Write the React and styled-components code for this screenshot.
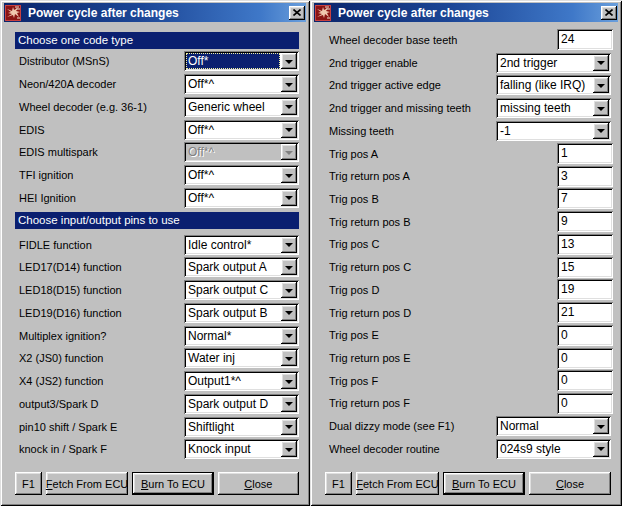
import React from "react";
import styled, { createGlobalStyle, css } from "styled-components";

const GlobalStyle = createGlobalStyle`
  html, body {
    margin: 0;
    padding: 0;
    background: #c0c0c0;
    font-family: "Liberation Sans", Arial, sans-serif;
    font-size: 11px;
  }
`;

const raised = css`
  box-shadow: inset -1px -1px #000, inset 1px 1px #fff, inset -2px -2px #808080,
    inset 2px 2px #dfdfdf;
`;

const sunken = css`
  box-shadow: inset 1px 1px #808080, inset -1px -1px #fff, inset 2px 2px #000,
    inset -2px -2px #dfdfdf;
`;

const Desktop = styled.div`
  display: flex;
  width: 622px;
  height: 506px;
`;

const Window = styled.div`
  box-sizing: border-box;
  width: ${(p) => p.$width}px;
  height: 506px;
  padding: 3px 4px 4px 4px;
  background: #c0c0c0;
  display: flex;
  flex-direction: column;
  box-shadow: inset 1px 1px #dfdfdf, inset -1px -1px #000, inset 2px 2px #fff,
    inset -2px -2px #808080;
`;

const TitleBar = styled.div`
  height: 19px;
  display: flex;
  align-items: center;
  padding: 0 1px 0 1px;
  background: linear-gradient(to right, #0a246a, #1c4696 45%, #3f78c8 85%, #6a9fdc);
`;

const TitleText = styled.div`
  flex: 1;
  margin-left: 7px;
  color: #fff;
  font-weight: bold;
  font-size: 12px;
  white-space: nowrap;
`;

const CloseBox = styled.div`
  width: 16px;
  height: 14px;
  background: #c0c0c0;
  ${raised};
  display: flex;
  align-items: center;
  justify-content: center;
`;

const Content = styled.div`
  flex: 1;
  display: flex;
  flex-direction: column;
  padding: ${(p) => p.$top}px 7px 7px 11px;
`;

const Form = styled.div`
  display: flex;
  flex-direction: column;
  gap: 2px;
`;

const SectionHeader = styled.div`
  height: 17px;
  line-height: 17px;
  background: #0a1f70;
  color: #fff;
  padding-left: 3px;
  font-size: 11.5px;
  margin-top: ${(p) => p.$mt || 0}px;
  margin-bottom: ${(p) => p.$mb || 0}px;
`;

const Row = styled.div`
  height: ${(p) => p.$h}px;
  display: flex;
  align-items: center;
  justify-content: space-between;
`;

const Label = styled.span`
  padding-left: 4px;
  color: #000;
  white-space: nowrap;
`;

const Combo = styled.div`
  box-sizing: border-box;
  width: 115px;
  height: 20px;
  padding: 2px;
  display: flex;
  background: ${(p) => (p.$disabled ? "#c0c0c0" : "#fff")};
  ${sunken};
`;

const ComboValue = styled.div`
  flex: 1;
  margin-right: 1px;
  padding-left: 2px;
  display: flex;
  align-items: center;
  font-size: 12px;
  white-space: nowrap;
  overflow: hidden;
  color: #000;
  ${(p) =>
    p.$focused &&
    css`
      background: #0a1f70;
      color: #fff;
      outline: 1px dotted #f0f0a0;
      outline-offset: -1px;
    `}
  ${(p) =>
    p.$disabled &&
    css`
      color: #808080;
      text-shadow: 1px 1px #fff;
    `}
`;

const ArrowBtn = styled.div`
  width: 16px;
  height: 16px;
  background: #c0c0c0;
  ${raised};
  display: flex;
  align-items: center;
  justify-content: center;
  &::after {
    content: "";
    border-left: 4px solid transparent;
    border-right: 4px solid transparent;
    border-top: 4px solid ${(p) => (p.$disabled ? "#808080" : "#000")};
    margin-top: 1px;
  }
`;

const NumBox = styled.div`
  box-sizing: border-box;
  width: 56px;
  height: 21px;
  padding: 3px 4px 0 4px;
  margin-right: -2px;
  background: #fff;
  font-size: 12px;
  ${sunken};
`;

const ButtonBar = styled.div`
  margin-top: auto;
  display: flex;
  gap: 4px;
`;

const Btn = styled.div`
  box-sizing: border-box;
  width: ${(p) => p.$w}px;
  height: 23px;
  display: flex;
  align-items: center;
  justify-content: center;
  font-size: 11px;
  background: #c0c0c0;
  white-space: nowrap;
  ${(p) =>
    p.$default
      ? css`
          box-shadow: inset 0 0 0 1px #000, inset -2px -2px #000,
            inset 2px 2px #fff, inset -3px -3px #808080, inset 3px 3px #dfdfdf;
        `
      : raised};
`;

function AppIcon() {
  return (
    <svg width="16" height="16" viewBox="0 0 16 16">
      <rect x="0" y="0" width="16" height="16" fill="#8a1414" />
      <rect x="0.5" y="0.5" width="15" height="15" fill="none" stroke="#c84040" />
      <path
        d="M2 4 L6 7 L3 8 L7 9 L2 12 L8 10 L9 13 L10 9 L14 12 L12 8 L15 7 L11 6 L13 3 L9 5 L8 2 L7 6 Z"
        fill="#f0c8b0"
      />
      <path d="M10 2 L14 2 M11 4 L15 4 M12 13 L15 13" stroke="#f0e0d0" strokeWidth="1" />
    </svg>
  );
}

function CloseIcon() {
  return (
    <svg width="8" height="7" viewBox="0 0 8 7">
      <path d="M0.5 0.5 L7.5 6.5 M7.5 0.5 L0.5 6.5" stroke="#000" strokeWidth="1.6" />
    </svg>
  );
}

function Title() {
  return (
    <TitleBar>
      <AppIcon />
      <TitleText>Power cycle after changes</TitleText>
      <CloseBox>
        <CloseIcon />
      </CloseBox>
    </TitleBar>
  );
}

function Select({ value, focused, disabled }) {
  return (
    <Combo $disabled={disabled}>
      <ComboValue $focused={focused} $disabled={disabled}>
        {value}
      </ComboValue>
      <ArrowBtn $disabled={disabled} />
    </Combo>
  );
}

function Buttons() {
  return (
    <ButtonBar>
      <Btn $w={27}>F1</Btn>
      <Btn $w={83}>
        <u>F</u>etch From ECU
      </Btn>
      <Btn $w={82} $default>
        <u>B</u>urn To ECU
      </Btn>
      <Btn $w={82}>
        <u>C</u>lose
      </Btn>
    </ButtonBar>
  );
}

const codeType = [
  ["Distributor (MSnS)", "Off*", { focused: true }],
  ["Neon/420A decoder", "Off*^"],
  ["Wheel decoder (e.g. 36-1)", "Generic wheel"],
  ["EDIS", "Off*^"],
  ["EDIS multispark", "Off*^", { disabled: true }],
  ["TFI ignition", "Off*^"],
  ["HEI Ignition", "Off*^"],
];

const pins = [
  ["FIDLE function", "Idle control*"],
  ["LED17(D14) function", "Spark output A"],
  ["LED18(D15) function", "Spark output C"],
  ["LED19(D16) function", "Spark output B"],
  ["Multiplex ignition?", "Normal*"],
  ["X2 (JS0) function", "Water inj"],
  ["X4 (JS2) function", "Output1*^"],
  ["output3/Spark D", "Spark output D"],
  ["pin10 shift / Spark E", "Shiftlight"],
  ["knock in / Spark F", "Knock input"],
];

const wheel = [
  ["Wheel decoder base teeth", "num", "24"],
  ["2nd trigger enable", "sel", "2nd trigger"],
  ["2nd trigger active edge", "sel", "falling (like IRQ)"],
  ["2nd trigger and missing teeth", "sel", "missing teeth"],
  ["Missing teeth", "sel", "-1"],
  ["Trig pos A", "num", "1"],
  ["Trig return pos A", "num", "3"],
  ["Trig pos B", "num", "7"],
  ["Trig return pos B", "num", "9"],
  ["Trig pos C", "num", "13"],
  ["Trig return pos C", "num", "15"],
  ["Trig pos D", "num", "19"],
  ["Trig return pos D", "num", "21"],
  ["Trig pos E", "num", "0"],
  ["Trig return pos E", "num", "0"],
  ["Trig pos F", "num", "0"],
  ["Trig return pos F", "num", "0"],
  ["Dual dizzy mode (see F1)", "sel", "Normal"],
  ["Wheel decoder routine", "sel", "024s9 style"],
];

export default function App() {
  return (
    <>
      <GlobalStyle />
      <Desktop>
        <Window $width={310}>
          <Title />
          <Content $top={10}>
            <Form>
              <SectionHeader>Choose one code type</SectionHeader>
              {codeType.map(([label, value, opts = {}]) => (
                <Row key={label} $h={20.75}>
                  <Label>{label}</Label>
                  <Select value={value} {...opts} />
                </Row>
              ))}
              <SectionHeader $mt={2} $mb={3}>
                Choose input/output pins to use
              </SectionHeader>
              {pins.map(([label, value]) => (
                <Row key={label} $h={20.75}>
                  <Label>{label}</Label>
                  <Select value={value} />
                </Row>
              ))}
            </Form>
            <Buttons />
          </Content>
        </Window>
        <Window $width={312}>
          <Title />
          <Content $top={7.6}>
            <Form>
              {wheel.map(([label, kind, value]) => (
                <Row key={label} $h={20.72}>
                  <Label>{label}</Label>
                  {kind === "num" ? <NumBox>{value}</NumBox> : <Select value={value} />}
                </Row>
              ))}
            </Form>
            <Buttons />
          </Content>
        </Window>
      </Desktop>
    </>
  );
}
